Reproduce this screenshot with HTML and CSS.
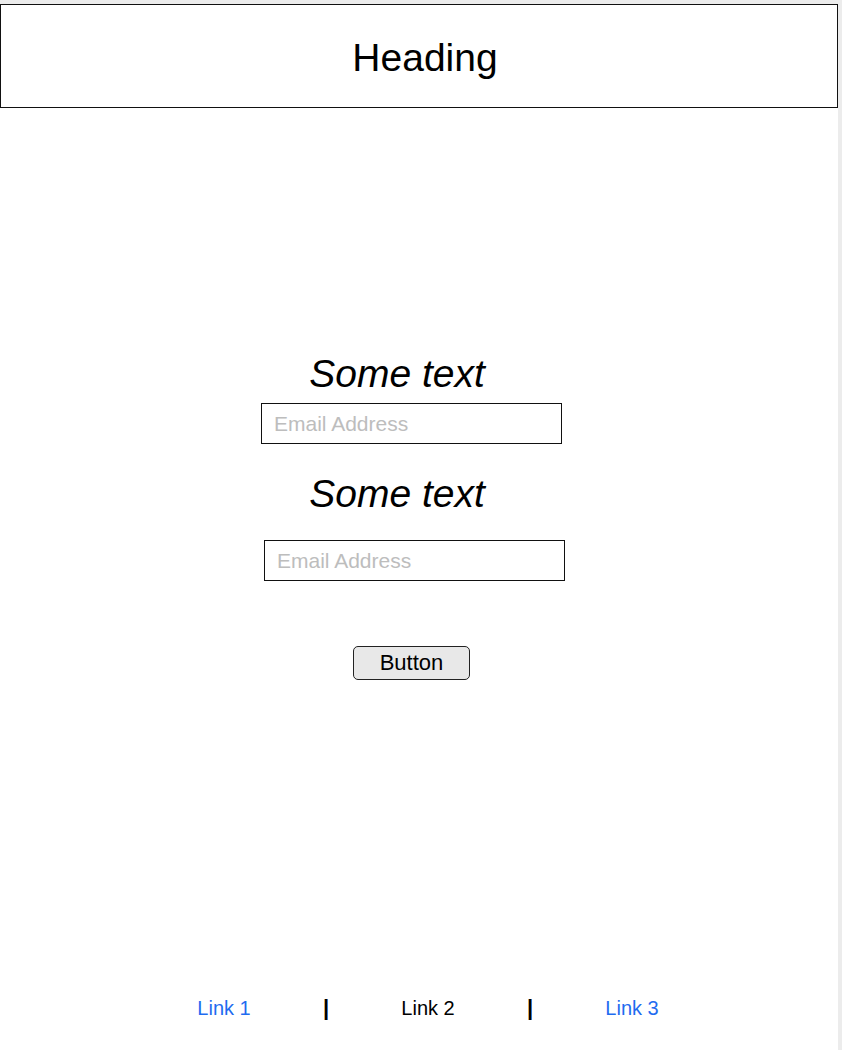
FILE: index.html
```html
<!DOCTYPE html>
<html lang="en">
<head>
<meta charset="utf-8">
<title>Form</title>
<link rel="stylesheet" href="styles.css">
</head>
<body>
<div class="page">
  <header class="header">
    <h1 class="heading">Heading</h1>
  </header>
  <main class="main">
    <p class="some-text">Some text</p>
    <input class="field field-1" type="email" placeholder="Email Address">
    <p class="some-text some-text-2">Some text</p>
    <input class="field field-2" type="email" placeholder="Email Address">
    <button class="btn" type="button">Button</button>
  </main>
  <footer class="footer">
    <a class="link link-blue" href="#">Link 1</a>
    <span class="sep">|</span>
    <a class="link link-black" href="#">Link 2</a>
    <span class="sep">|</span>
    <a class="link link-blue" href="#">Link 3</a>
  </footer>
</div>
</body>
</html>
```
FILE: styles.css
```css
html, body {
  margin: 0;
  padding: 0;
  background: #ffffff;
}

body {
  font-family: "Liberation Sans", Arial, Helvetica, sans-serif;
  color: #000;
}

.page {
  display: flex;
  flex-direction: column;
  height: 1050px;
  box-sizing: border-box;
  border-top: 4px solid #ececec;
  border-right: 4px solid #ececec;
}

.header {
  height: 104px;
  box-sizing: border-box;
  border: 1px solid #111;
  display: flex;
  align-items: center;
  justify-content: center;
}

.heading {
  margin: 4px 0 0 12px;
  font-size: 39px;
  font-weight: normal;
  line-height: 44px;
}

.main {
  flex: 1;
  display: flex;
  flex-direction: column;
  align-items: center;
  padding-top: 244px;
  padding-right: 15px;
}

.some-text {
  margin: 0 29px 0 0;
  font-size: 39px;
  font-style: italic;
  line-height: 44px;
}

.some-text-2 {
  margin-top: 28px;
}

.field {
  width: 301px;
  height: 41px;
  box-sizing: border-box;
  border: 1px solid #111;
  border-radius: 0;
  padding: 0 12px;
  font-family: "Liberation Sans", Arial, sans-serif;
  font-size: 21px;
  color: #000;
  background: #fff;
  outline: none;
}

.field::placeholder {
  color: #bdbdbd;
}

.field-1 {
  margin-top: 7px;
}

.field-2 {
  margin-top: 24px;
  margin-left: 6px;
}

.btn {
  margin-top: 65px;
  width: 117px;
  height: 34px;
  box-sizing: border-box;
  border: 1px solid #222;
  border-radius: 5px;
  background: #e8e8e8;
  font-family: "Liberation Sans", Arial, sans-serif;
  font-size: 22px;
  color: #000;
  padding: 0;
  line-height: 30px;
}

.footer {
  display: flex;
  justify-content: center;
  padding: 0 0 30px 18px;
}

.link, .sep {
  width: 102px;
  text-align: center;
  font-size: 20px;
  line-height: 24px;
  text-decoration: none;
}

.link-blue {
  color: #1f6cf0;
}

.link-black {
  color: #000;
}

.sep {
  font-weight: bold;
  font-size: 22px;
  color: #000;
}
```
